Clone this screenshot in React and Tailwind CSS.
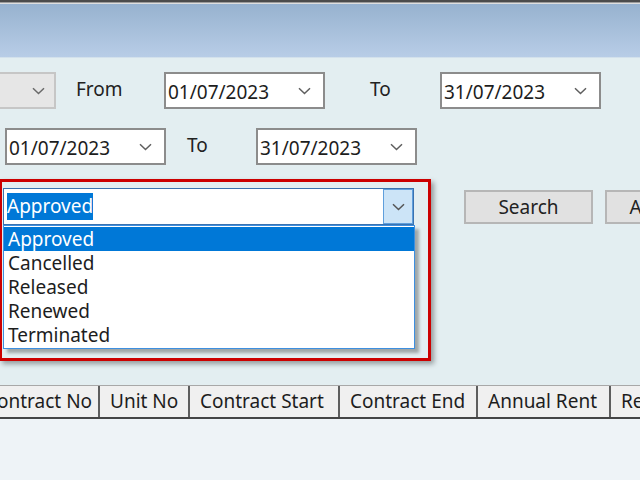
const Chevron = ({ color = "#5f5f5f" }) => (
  <svg width="13" height="8" viewBox="0 0 13 8" fill="none">
    <path d="M1 1.2 L6.5 6.5 L12 1.2" stroke={color} strokeWidth="1.5" />
  </svg>
);

const DateBox = ({ value, className = "" }) => (
  <div className={`shrink-0 flex items-center justify-between h-[37px] w-[161px] bg-white border-2 border-[#8c8c8c] pl-[2px] pr-[12px] ${className}`}>
    <span className="pt-[3px] text-[19px] text-[#1d1d1d]">{value}</span>
    <Chevron />
  </div>
);

const statuses = ["Approved", "Cancelled", "Released", "Renewed", "Terminated"];

const columns = [
  { label: "Contract No", w: "w-[125px] ml-[-25px]" },
  { label: "Unit No", w: "w-[90px]" },
  { label: "Contract Start", w: "w-[150px]" },
  { label: "Contract End", w: "w-[138px]" },
  { label: "Annual Rent", w: "w-[133px]" },
  { label: "Rent Status", w: "w-[130px]" },
];

export default function App() {
  return (
    <div className="w-[640px] h-[480px] overflow-hidden flex flex-col bg-[#e3eef1] font-['Noto_Sans',sans-serif]">
      {/* window chrome */}
      <div className="h-[2px] bg-[#4b4b4b]" />
      <div className="h-[1px] bg-[#9c9c9c]" />
      <div className="h-[1px] bg-[#dedede]" />
      <div className="h-[53px] bg-gradient-to-b from-[#97b2cf] to-[#b8cde7]" />
      <div className="h-[1px] bg-[#d3e1ec]" />

      {/* filter panel */}
      <div className="pt-[14px]">
        <div className="flex items-center h-[37px]">
          <div className="shrink-0 w-[58px] ml-[-2px] h-full flex items-center justify-end pr-[9px] bg-[#e6e6e6] border-2 border-[#c6c6c6]">
            <Chevron color="#6a6a6a" />
          </div>
          <div className="shrink-0 w-[108px] pl-[20px] pb-[3px] text-[19px] text-[#222]">From</div>
          <DateBox value="01/07/2023" />
          <div className="shrink-0 w-[115px] pl-[45px] pb-[3px] text-[19px] text-[#222]">To</div>
          <DateBox value="31/07/2023" />
        </div>

        <div className="flex items-center h-[37px] mt-[19px]">
          <DateBox value="01/07/2023" className="ml-[5px]" />
          <div className="shrink-0 w-[90px] pl-[21px] pb-[3px] text-[19px] text-[#222]">To</div>
          <DateBox value="31/07/2023" />
        </div>

        <div className="flex items-start mt-[14px]">
          <div className="shrink-0 ml-[-1px] w-[432px] h-[182px] border-[3px] border-[#cc0000] shadow-[3px_3px_5px_rgba(0,0,0,0.35)] pt-[6px] pl-[1px]">
            <div className="flex w-[411px] h-[37px] border border-[#3a72b0] bg-white">
              <div className="flex-1 flex items-center pl-[3px]">
                <span className="bg-[#0078d7] text-white text-[19px] leading-[27px]">Approved</span>
              </div>
              <div className="w-[30px] flex items-center justify-center bg-[#cce4f7] border border-[#5f9fdc]">
                <Chevron color="#555" />
              </div>
            </div>
            <div className="w-[412px] bg-white border border-[#3d8fe0] py-[1px] shadow-[4px_4px_3px_rgba(0,0,0,0.3)]">
              {statuses.map((s, i) => (
                <div
                  key={s}
                  className={`h-[24px] leading-[24px] pl-[4px] text-[19px] ${i === 0 ? "bg-[#0078d7] text-white" : "text-[#1d1d1d]"}`}
                >
                  {s}
                </div>
              ))}
            </div>
          </div>

          <button className="ml-[33px] mt-[11px] shrink-0 w-[129px] h-[34px] bg-[#e1e1e1] border-2 border-[#b6b6b6] text-[19px] text-[#222]">
            Search
          </button>
          <button className="ml-[12px] mt-[11px] shrink-0 w-[129px] h-[34px] bg-[#e1e1e1] border-2 border-[#b6b6b6] text-[19px] text-[#222]">
            Add New
          </button>
        </div>
      </div>

      {/* grid header */}
      <div className="flex mt-[24px] h-[34px] bg-[#f0f0f0] border-t border-[#a8a8a8] border-b-2 border-b-[#454545]">
        {columns.map((c) => (
          <div
            key={c.label}
            className={`${c.w} shrink-0 flex items-center pl-[10px] border-r-2 border-[#5e5e5e] text-[19px] text-[#1d1d1d] whitespace-nowrap overflow-hidden`}
          >
            {c.label}
          </div>
        ))}
      </div>
      <div className="flex-1 bg-[#eef3f7]" />
    </div>
  );
}
